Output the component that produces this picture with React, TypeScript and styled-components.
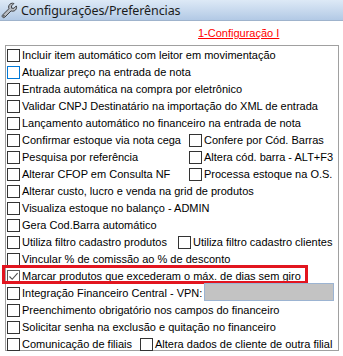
import React from "react";
import styled, { createGlobalStyle, css } from "styled-components";

const Global = createGlobalStyle`
  html, body { margin: 0; padding: 0; background: #ffffff; }
  body { width: 343px; height: 356px; overflow: hidden; }
`;

const Window = styled.div`
  width: 343px;
  height: 356px;
  background: #ffffff;
  font-family: "Liberation Sans", Arial, sans-serif;
  font-size: 11px;
  color: #000000;
  position: relative;
`;

const TitleBar = styled.div`
  height: 21px;
  box-sizing: border-box;
  display: flex;
  align-items: center;
  gap: 3px;
  padding-left: 1px;
  background: linear-gradient(to bottom, #dde9f6 0%, #c6d8ed 55%, #b2c9e5 100%);
  border-bottom: 1px solid #9fb3cc;
`;

const TitleText = styled.span`
  font-family: "Noto Sans", "Open Sans", sans-serif;
  font-size: 12.5px;
  color: #1b1b1b;
  letter-spacing: -0.1px;
`;

const LinkRow = styled.div`
  height: 24px;
  box-sizing: border-box;
  display: flex;
  align-items: flex-start;
  padding: 5px 0 0 198px;
`;

const ConfigLink = styled.a`
  color: #ff0000;
  text-decoration: underline;
  font-size: 11px;
  line-height: 14px;
  cursor: pointer;
`;

const GroupBox = styled.div`
  margin: 0 0 0 5px;
  width: 334px;
  height: 306px;
  box-sizing: border-box;
  border: 1px solid #a0a0a0;
  padding: 1px 0 0 1px;
`;

const Row = styled.div<{ $highlight?: boolean }>`
  height: 17px;
  display: flex;
  align-items: center;
  position: relative;
  ${(p) =>
    p.$highlight &&
    css`
      &::after {
        content: "";
        position: absolute;
        left: -5px;
        top: -3px;
        width: 306px;
        height: 19px;
        box-sizing: border-box;
        border: 3px solid #e2151f;
        pointer-events: none;
      }
    `}
`;

const Item = styled.label<{ $width?: number }>`
  display: flex;
  align-items: center;
  gap: 2px;
  white-space: nowrap;
  flex: 0 0 auto;
  ${(p) => (p.$width ? `width: ${p.$width}px;` : "")}
`;

type BoxState = "normal" | "focus" | "checked";

const Box = styled.span<{ $state: BoxState }>`
  width: 13px;
  height: 13px;
  box-sizing: border-box;
  background: #ffffff;
  display: inline-flex;
  align-items: center;
  justify-content: center;
  border: 1px solid
    ${(p) =>
      p.$state === "focus" ? "#0078d7" : p.$state === "checked" ? "#5a5a5a" : "#333333"};
  flex: 0 0 auto;
`;

const Label = styled.span`
  line-height: 17px;
`;

const VpnField = styled.div`
  width: 130px;
  height: 18px;
  box-sizing: border-box;
  margin-left: 2px;
  margin-top: -3px;
  background: #c3c3c3;
  border: 1px solid #9cb4d2;
`;

const Check = () => (
  <svg width="11" height="11" viewBox="0 0 11 11">
    <path d="M1.5 5.5 L4.2 8.3 L9.6 2.2" fill="none" stroke="#4d4d4d" strokeWidth="1.1" />
  </svg>
);

const Wrench = () => (
  <svg width="17" height="17" viewBox="0 0 17 17">
    <path
      d="M11.5 1.2 C9.3 1.2 7.6 3 7.6 5.1 C7.6 5.7 7.7 6.2 7.9 6.7 L1.6 13 C1 13.6 1 14.6 1.6 15.2 C2.2 15.8 3.2 15.8 3.8 15.2 L10.1 8.9 C10.6 9.1 11.1 9.2 11.7 9.2 C13.8 9.2 15.6 7.5 15.6 5.3 C15.6 4.8 15.5 4.3 15.3 3.9 L12.9 6.3 L10.6 6.2 L10.5 3.9 L12.9 1.5 C12.5 1.3 12 1.2 11.5 1.2 Z"
      fill="#b8bcc2"
      stroke="#3c3f44"
      strokeWidth="1"
      strokeLinejoin="round"
    />
    <circle cx="2.9" cy="13.9" r="0.8" fill="#3c3f44" />
  </svg>
);

type Opt = { text: string; state?: BoxState; width?: number };

const CheckItem = ({ text, state = "normal", width }: Opt) => (
  <Item $width={width}>
    <Box $state={state}>{state === "checked" && <Check />}</Box>
    <Label>{text}</Label>
  </Item>
);

type RowDef = { items: Opt[]; highlight?: boolean; vpn?: boolean };

const rows: RowDef[] = [
  { items: [{ text: "Incluir item automático com leitor em movimentação" }] },
  { items: [{ text: "Atualizar preço na entrada de nota", state: "focus" }] },
  { items: [{ text: "Entrada automática na compra por eletrônico" }] },
  { items: [{ text: "Validar CNPJ Destinatário na importação do XML de entrada" }] },
  { items: [{ text: "Lançamento automático no financeiro na entrada de nota" }] },
  { items: [{ text: "Confirmar estoque via nota cega", width: 182 }, { text: "Confere por Cód. Barras" }] },
  { items: [{ text: "Pesquisa por referência", width: 182 }, { text: "Altera cód. barra - ALT+F3" }] },
  { items: [{ text: "Alterar CFOP em Consulta NF", width: 182 }, { text: "Processa estoque na O.S." }] },
  { items: [{ text: "Alterar custo, lucro e venda na grid de produtos" }] },
  { items: [{ text: "Visualiza estoque no balanço - ADMIN" }] },
  { items: [{ text: "Gera Cod.Barra automático" }] },
  { items: [{ text: "Utiliza filtro cadastro produtos", width: 171 }, { text: "Utiliza filtro cadastro clientes" }] },
  { items: [{ text: "Vincular % de comissão ao % de desconto" }] },
  { items: [{ text: "Marcar produtos que excederam o máx. de dias sem giro", state: "checked" }], highlight: true },
  { items: [{ text: "Integração Financeiro Central - VPN:" }], vpn: true },
  { items: [{ text: "Preenchimento obrigatório nos campos do financeiro" }] },
  { items: [{ text: "Solicitar senha na exclusão e quitação no financeiro" }] },
  { items: [{ text: "Comunicação de filiais", width: 133 }, { text: "Altera dados de cliente de outra filial" }] },
];

export default function App() {
  return (
    <Window>
      <Global />
      <TitleBar>
        <Wrench />
        <TitleText>Configurações/Preferências</TitleText>
      </TitleBar>
      <LinkRow>
        <ConfigLink>1-Configuração I</ConfigLink>
      </LinkRow>
      <GroupBox>
        {rows.map((r, i) => (
          <Row key={i} $highlight={r.highlight}>
            {r.items.map((it, j) => (
              <CheckItem key={j} {...it} />
            ))}
            {r.vpn && <VpnField />}
          </Row>
        ))}
      </GroupBox>
    </Window>
  );
}
